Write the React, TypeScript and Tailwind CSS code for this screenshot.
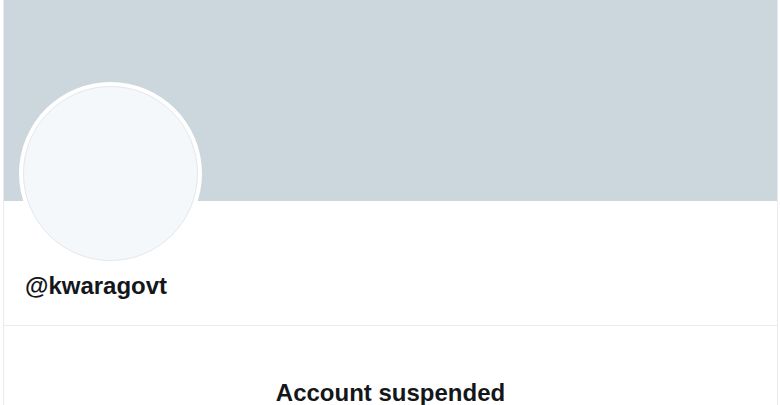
export default function App() {
  return (
    <div className="h-[405px] w-[780px] overflow-hidden bg-white pl-[3px] pr-[2px] font-['Liberation_Sans',Arial,sans-serif]">
      <div className="min-h-full border-x border-[#e6ecf0]">
        <div className="h-[201px] bg-[#ccd6dd]" />
        <div className="px-[15px]">
          <div className="-mt-[119px] h-[183px] w-[183px] rounded-full bg-white p-[4px]">
            <div className="h-full w-full rounded-full border border-[#e1e8ed] bg-[#f5f8fa]" />
          </div>
          <div className="mt-[6px] pl-[6px] text-[24px] leading-[29px] font-bold text-[#14171a]">@kwaragovt</div>
        </div>
        <div className="mt-[25px] border-t border-[#e6ecf0]" />
        <div className="pt-[52px] text-center text-[24px] leading-[29px] font-bold text-[#14171a]">Account suspended</div>
      </div>
    </div>
  );
}
